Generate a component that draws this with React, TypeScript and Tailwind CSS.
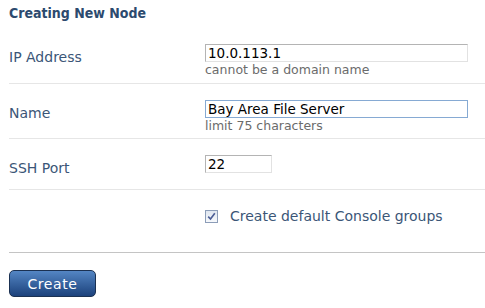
import React from "react";

const font = "font-['DejaVu_Sans','Verdana',sans-serif]";

type RowProps = {
  label?: string;
  children: React.ReactNode;
  className?: string;
};

const Row: React.FC<RowProps> = ({ label, children, className }) => (
  <div className={`flex border-b border-[#e6e6e6] ${className ?? ""}`}>
    <div className="w-[196px] shrink-0 pt-[3px] text-[14px] leading-[20px] text-[#3b5677]">
      {label}
    </div>
    <div className="flex flex-col">{children}</div>
  </div>
);

const TextField: React.FC<{ value: string; width: string; focused?: boolean }> = ({
  value,
  width,
  focused,
}) => (
  <div
    className={`${width} h-[18px] border px-[2px] text-[13.5px] leading-[16px] text-black ${
      focused
        ? "border-[#86aad3]"
        : "border-[#b4b4b4] border-b-[#e2e2e2] border-r-[#e2e2e2]"
    }`}
  >
    {value}
  </div>
);

export default function App() {
  return (
    <div className={`w-[485px] h-[308px] bg-white pl-[9px] ${font}`}>
      <h2 className="pt-[5px] h-[28px] font-['DejaVu_Sans_Condensed','Tahoma',sans-serif] text-[14px] leading-[17px] font-bold text-[#2c4a6e]">
        Creating New Node
      </h2>

      <Row label="IP Address" className="h-[56px] pt-[16px]">
        <TextField value="10.0.113.1" width="w-[263px]" />
        <p className="text-[12.5px] leading-[15px] text-[#6b6b6b]">cannot be a domain name</p>
      </Row>

      <Row label="Name" className="h-[55px] pt-[16px]">
        <TextField value="Bay Area File Server" width="w-[263px]" focused />
        <p className="text-[12.5px] leading-[15px] text-[#6b6b6b]">limit 75 characters</p>
      </Row>

      <Row label="SSH Port" className="h-[51px] pt-[16px]">
        <TextField value="22" width="w-[67px]" />
      </Row>

      <div className="flex h-[63px] border-b border-[#c4c4c4] pt-[19px]">
        <div className="w-[196px] shrink-0" />
        <label className="flex items-center gap-[12px] h-[14px]">
          <span className="flex items-center justify-center w-[13px] h-[13px] border border-[#8c9db8] bg-gradient-to-b from-[#dfe6f0] to-[#f7f9fc]">
            <svg width="9" height="9" viewBox="0 0 9 9">
              <path d="M1.2 4.6 L3.5 7 L7.8 1.2" fill="none" stroke="#4b5d95" strokeWidth="1.6" />
            </svg>
          </span>
          <span className="text-[14px] leading-[20px] text-[#3b5677]">Create default Console groups</span>
        </label>
      </div>

      <div className="pt-[17px]">
        <button className="w-[87px] h-[27px] rounded-[5px] border border-[#1b3152] bg-gradient-to-b from-[#5486c4] to-[#1c427c] text-[14px] leading-[18px] tracking-[0.6px] text-white">
          Create
        </button>
      </div>
    </div>
  );
}
